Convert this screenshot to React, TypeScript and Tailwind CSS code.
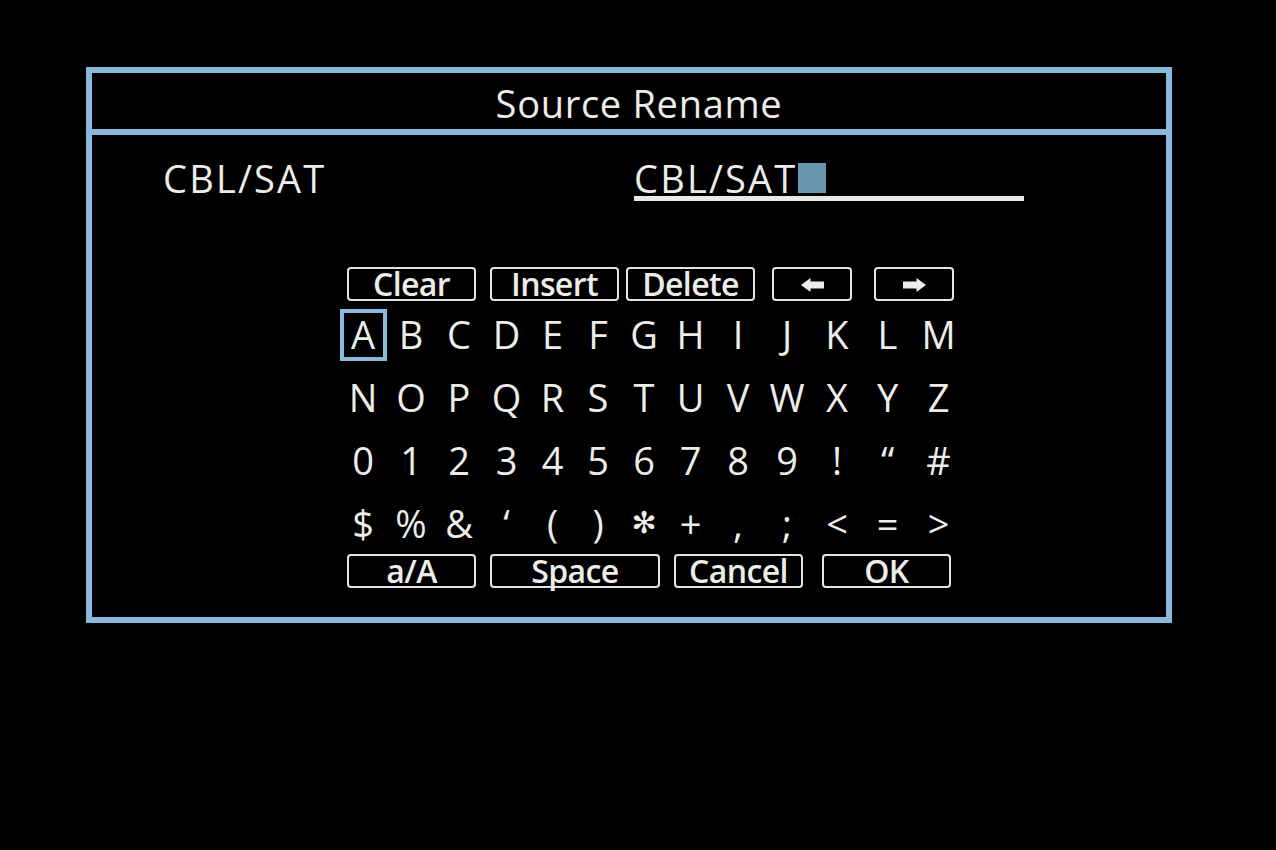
import React from "react";

const FONT = { fontFamily: '"Open Sans", "Noto Sans", "Liberation Sans", sans-serif' };

const rows: string[][] = [
  ["A", "B", "C", "D", "E", "F", "G", "H", "I", "J", "K", "L", "M"],
  ["N", "O", "P", "Q", "R", "S", "T", "U", "V", "W", "X", "Y", "Z"],
  ["0", "1", "2", "3", "4", "5", "6", "7", "8", "9", "!", "\u201C", "#"],
  ["$", "%", "&", "\u2018", "(", ")", "\u273B", "+", ",", ";", "<", "=", ">"],
];

function Btn({ w, children, className = "" }: { w: string; children: React.ReactNode; className?: string }) {
  return (
    <div
      className={`${w} ${className} h-[34px] border-2 border-[#e4e4e0] rounded-[4px] flex items-center justify-center text-[32px] font-semibold leading-none text-[#ecece8] font-stretch-[94%] tracking-[-0.6px]`}
    >
      <span className="-mt-[1px]">{children}</span>
    </div>
  );
}

function ArrowLeft() {
  return (
    <svg width="23" height="14" viewBox="0 0 23 14">
      <polygon points="0,7 9.5,0 9.5,3.5 23,3.5 23,10.5 9.5,10.5 9.5,14" fill="#ecece8" />
    </svg>
  );
}

function ArrowRight() {
  return (
    <svg width="23" height="14" viewBox="0 0 23 14">
      <polygon points="23,7 13.5,0 13.5,3.5 0,3.5 0,10.5 13.5,10.5 13.5,14" fill="#ecece8" />
    </svg>
  );
}

export default function App() {
  return (
    <div className="w-[1276px] h-[850px] bg-black overflow-hidden" style={FONT}>
      <div className="pt-[67px] pl-[86px]">
        <div className="w-[1086px] h-[556px] border-[6px] border-[#89b9da] flex flex-col">
          <div className="h-[62px] border-b-[6px] border-[#89b9da] flex items-center justify-center pt-[3px] pl-[20px]">
            <span className="text-[38px] leading-none text-[#ecece8] tracking-[0.7px]">Source Rename</span>
          </div>
          <div className="flex-1 flex flex-col">
            <div className="flex pt-[26px] pl-[71px]">
              <div className="w-[471px] text-[38px] leading-[35px] text-[#ecece8] tracking-[2.2px]">CBL/SAT</div>
              <div className="w-[390px] border-b-[5px] border-[#e8e8e4] flex items-end">
                <span className="text-[38px] leading-[35px] text-[#ecece8] tracking-[2.2px]">CBL/SAT</span>
                <div className="w-[28px] h-[30px] bg-[#6a95b1] mb-[3px] ml-[1px]" />
              </div>
            </div>
            <div className="pl-[247px] mt-[66px] flex flex-col">
              <div className="flex ml-[8px]">
                <Btn w="w-[129px]">Clear</Btn>
                <Btn w="w-[129px]" className="ml-[14px]">Insert</Btn>
                <Btn w="w-[129px]" className="ml-[7px]">Delete</Btn>
                <Btn w="w-[80px]" className="ml-[17px]">
                  <span className="block mt-[3px]"><ArrowLeft /></span>
                </Btn>
                <Btn w="w-[80px]" className="ml-[22px]">
                  <span className="block mt-[3px]"><ArrowRight /></span>
                </Btn>
              </div>
              <div className="mt-[7px] grid grid-cols-[48px_48px_48px_47px_45px_46px_46px_47px_48px_50px_50px_51px_51px] auto-rows-[52px] gap-y-[11px] w-[625px]">
                {rows.map((row, ri) =>
                  row.map((ch, ci) => {
                    const sel = ri === 0 && ci === 0;
                    const isStar = ch === "\u273B";
                    return (
                      <div key={`${ri}-${ci}`} className="relative flex items-center justify-center">
                        {sel && (
                          <div className="absolute left-[1px] top-[1px] w-[47px] h-[52px] border-[4px] border-[#89b9da]" />
                        )}
                        <span
                          className={
                            isStar
                              ? "text-[30px] leading-[52px] text-[#ecece8]"
                              : "text-[38px] leading-[52px] text-[#ecece8]"
                          }
                          style={isStar ? { fontFamily: '"DejaVu Sans", sans-serif' } : undefined}
                        >
                          {ch}
                        </span>
                      </div>
                    );
                  })
                )}
              </div>
              <div className="flex ml-[8px] mt-[5px]">
                <Btn w="w-[129px]">a/A</Btn>
                <Btn w="w-[170px]" className="ml-[14px]">Space</Btn>
                <Btn w="w-[129px]" className="ml-[14px]">Cancel</Btn>
                <Btn w="w-[129px]" className="ml-[19px]">OK</Btn>
              </div>
            </div>
          </div>
        </div>
      </div>
    </div>
  );
}
